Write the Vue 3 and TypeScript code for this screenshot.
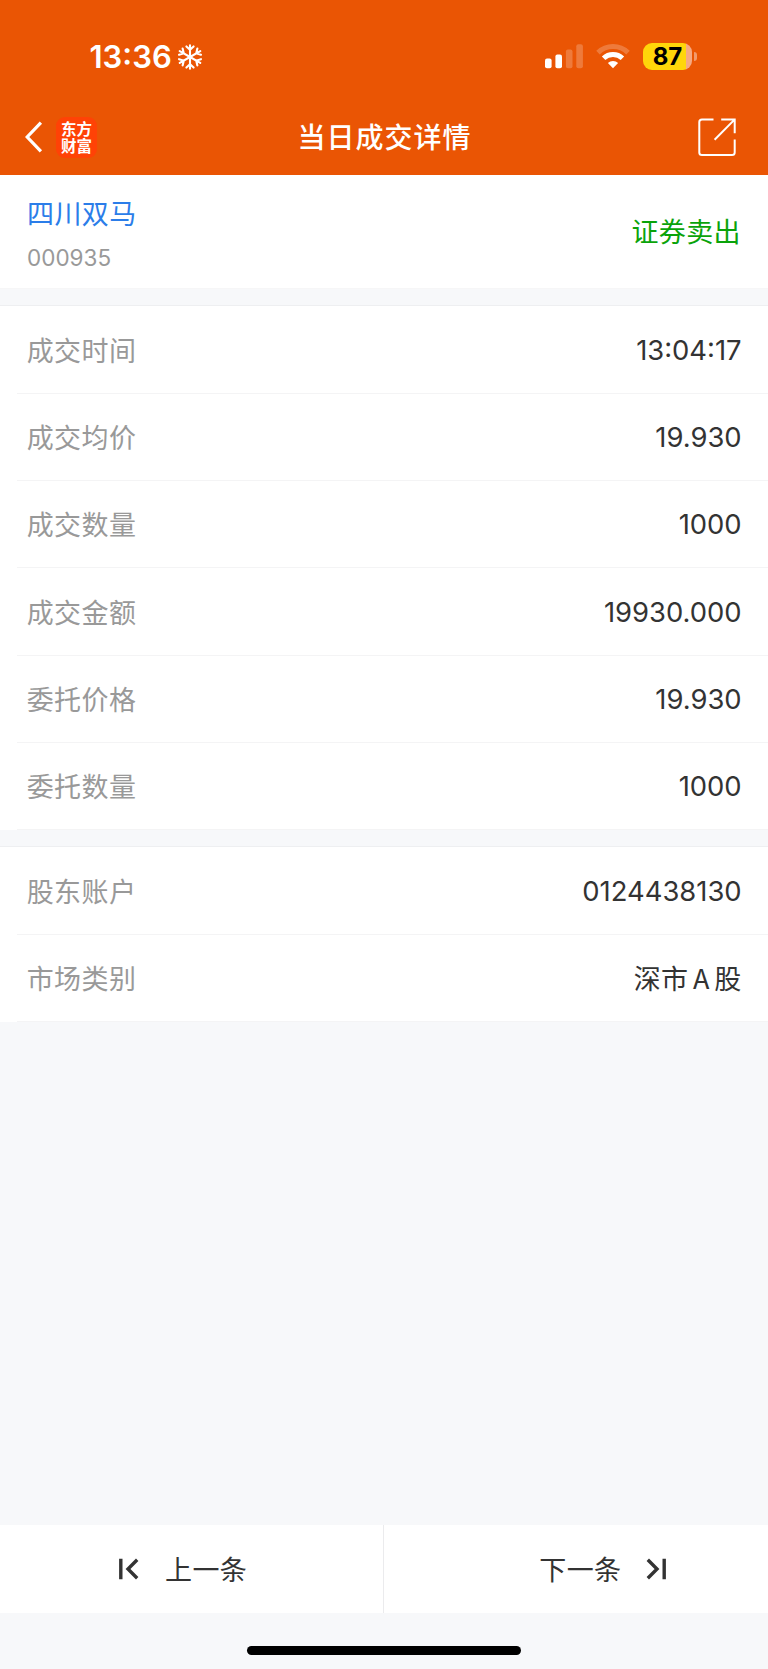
<script setup lang="ts">
interface Row {
  label: string
  value: string
  cjk?: boolean
}

const tradeRows: Row[] = [
  { label: '成交时间', value: '13:04:17' },
  { label: '成交均价', value: '19.930' },
  { label: '成交数量', value: '1000' },
  { label: '成交金额', value: '19930.000' },
  { label: '委托价格', value: '19.930' },
  { label: '委托数量', value: '1000' },
]

const accountRows: Row[] = [
  { label: '股东账户', value: '0124438130' },
  { label: '市场类别', value: '深市 A 股', cjk: true },
]

const groups: Row[][] = [tradeRows, accountRows]
const flakeArms: number[] = [0, 60, 120, 180, 240, 300]
</script>

<template>
  <div class="screen">
    <header class="top">
      <div class="status">
        <div class="clock">
          <span class="time">13:36</span>
          <svg class="flake" width="24" height="26" viewBox="-12 -13 24 26">
            <g v-for="a in flakeArms" :key="a" :transform="`rotate(${a})`">
              <path d="M0 0V-11.8M-3.6 -10.6L0 -7.2L3.6 -10.6" />
            </g>
          </svg>
        </div>
        <div class="indicators">
          <svg class="signal" width="38" height="25" viewBox="0 0 38 25">
            <rect x="0" y="14.6" width="6.6" height="9.6" rx="2" />
            <rect x="10.4" y="10.4" width="6.6" height="13.8" rx="2" />
            <rect class="dim" x="20.9" y="5.4" width="6.6" height="18.8" rx="2" />
            <rect class="dim" x="31.3" y="0.2" width="6.6" height="24" rx="2" />
          </svg>
          <svg class="wifi" width="34" height="25" viewBox="0 0 34 25">
            <path class="arc dim-arc" d="M2 8.6A21.6 21.6 0 0 1 32 8.6" />
            <path class="arc" d="M7.6 14.2A13.6 13.6 0 0 1 26.4 14.2" />
            <path d="M17 24.3L11.9 19.1A7.4 7.4 0 0 1 22.1 19.1Z" />
          </svg>
          <div class="battery"><span>87</span></div>
          <i class="nub"></i>
        </div>
      </div>
      <nav class="nav">
        <div class="nav-left">
          <svg width="18" height="32" viewBox="0 0 18 32">
            <path class="back" d="M15.9 1.6L2.2 16L15.9 30.4" />
          </svg>
          <div class="logo">东方<br />财富</div>
        </div>
        <h1>当日成交详情</h1>
        <svg class="share" width="38" height="38" viewBox="0 0 38 38">
          <path d="M15.5 1.4H4Q1.3 1.4 1.3 4V34.5Q1.3 37 4 37H34Q36.7 37 36.7 34.5V21.6" />
          <path d="M23.2 1.4H36.7V15.2M36.5 1.6L16.6 21.8" />
        </svg>
      </nav>
    </header>

    <section class="stock">
      <div class="ident">
        <div class="name">四川双马</div>
        <div class="code">000935</div>
      </div>
      <div class="side">证券卖出</div>
    </section>

    <section v-for="(rows, i) in groups" :key="i" class="group">
      <div v-for="row in rows" :key="row.label" class="row">
        <span class="label">{{ row.label }}</span>
        <span class="value" :class="{ cjk: row.cjk }">{{ row.value }}</span>
      </div>
    </section>

    <footer class="bottom">
      <div class="pager">
        <button class="prev">
          <svg width="20" height="22" viewBox="0 0 20 22">
            <path d="M1.8 0.7V21.3M18.2 1.8L9 11L18.2 20.2" />
          </svg>
          <span>上一条</span>
        </button>
        <button class="next">
          <span>下一条</span>
          <svg width="20" height="22" viewBox="0 0 20 22">
            <path d="M18.2 0.7V21.3M1.8 1.8L11 11L1.8 20.2" />
          </svg>
        </button>
      </div>
      <div class="home"></div>
    </footer>
  </div>
</template>

<style>
body {
  margin: 0;
  background: #f7f8fa;
}
</style>

<style scoped>
.screen {
  width: 768px;
  height: 1669px;
  display: flex;
  flex-direction: column;
  background: #f7f8fa;
  font-family: Inter, "Noto Sans CJK SC", sans-serif;
  color: #333;
  overflow: hidden;
}
.top {
  height: 175px;
  flex: none;
  background: #ea5504;
  color: #fff;
}
.status {
  height: 99px;
  box-sizing: border-box;
  padding: 43px 71px 0 89.5px;
  display: flex;
  justify-content: space-between;
}
.clock {
  display: flex;
  height: 28px;
  align-items: center;
}
.time {
  font-size: 31px;
  font-weight: 560;
  line-height: 28px;
  width: 88.5px;
}
.flake {
  fill: none;
  stroke: #fff;
  stroke-width: 2.1;
  stroke-linecap: round;
}
.indicators {
  display: flex;
  height: 27px;
  align-items: center;
}
.signal,
.wifi {
  fill: #fff;
}
.wifi {
  margin-left: 13px;
}
.dim {
  opacity: 0.22;
}
.arc {
  fill: none;
  stroke: #fff;
  stroke-width: 5;
}
.dim-arc {
  opacity: 0.22;
}
.battery {
  margin-left: 13px;
  width: 49px;
  height: 27px;
  border-radius: 9px;
  background: linear-gradient(to right, #ffd60a 43px, #f6a982 43px);
  color: #000;
  font-size: 24px;
  font-weight: 680;
  line-height: 27px;
  text-align: center;
}
.nub {
  width: 3px;
  height: 9px;
  margin-left: 2px;
  border-radius: 0 4px 4px 0;
  background: #f29a6c;
}
.nav {
  height: 76px;
  display: grid;
  grid-template-columns: 1fr auto 1fr;
  align-items: center;
  padding: 0 32px 0 25px;
}
.nav-left {
  display: flex;
  align-items: center;
  gap: 13px;
}
.back {
  fill: none;
  stroke: #fff;
  stroke-width: 3.2;
}
.logo {
  width: 41px;
  height: 41px;
  box-sizing: border-box;
  padding-top: 3px;
  border-radius: 9px;
  background: #ff4206;
  text-align: center;
  font-family: "Noto Sans CJK SC", sans-serif;
  font-size: 15.5px;
  font-weight: 700;
  line-height: 17px;
}
h1 {
  margin: 0;
  padding: 0 0 2px 8px;
  font-family: "Noto Sans CJK SC", sans-serif;
  font-size: 28px;
  font-weight: 500;
  letter-spacing: 1px;
  line-height: 40px;
}
.share {
  justify-self: end;
  fill: none;
  stroke: #fff;
  stroke-width: 2;
}
.stock {
  height: 114px;
  flex: none;
  box-sizing: border-box;
  padding: 0 27px;
  display: flex;
  align-items: center;
  justify-content: space-between;
  background: #fff;
  border-bottom: 1px solid #f6f6f7;
}
.ident {
  padding-top: 2px;
}
.name,
.side,
.label,
.cjk,
.pager span {
  font-family: "Noto Sans CJK SC", sans-serif;
  font-size: 27px;
  letter-spacing: 0.4px;
  line-height: 40px;
}
.name {
  color: #2b7de9;
}
.code {
  color: #999;
  font-size: 22.5px;
  line-height: 28px;
  margin-top: 11px;
}
.side {
  color: #0aa30a;
  padding-bottom: 2px;
}
.group {
  flex: none;
  margin-top: 16px;
  padding-top: 0.5px;
  border-top: 1px solid #eeeff1;
  background: #fff;
}
.row {
  height: 87.25px;
  box-sizing: border-box;
  margin-left: 17px;
  padding: 0.6px 26.4px 0 9.7px;
  display: flex;
  align-items: center;
  justify-content: space-between;
  border-bottom: 1px solid #f4f4f5;
}
.label {
  color: #999;
}
.value {
  font-size: 27.4px;
}
.value.cjk {
  font-size: 27px;
  word-spacing: -2px;
}
.bottom {
  margin-top: auto;
  height: 144px;
  flex: none;
}
.pager {
  height: 88px;
  display: grid;
  grid-template-columns: 384px 384px;
  background: #fff;
}
.pager button {
  border: 0;
  background: none;
  padding: 0;
  color: inherit;
  display: flex;
  align-items: center;
}
.pager svg {
  fill: none;
  stroke: #333;
  stroke-width: 3.4;
}
.pager .prev {
  gap: 26px;
  padding-left: 119px;
  border-right: 1px solid #ebebed;
}
.pager .next {
  gap: 24px;
  padding-right: 102.5px;
  justify-content: flex-end;
}
.home {
  width: 274px;
  height: 9px;
  margin: 32.5px 0 0 247px;
  border-radius: 5px;
  background: #000;
}
</style>
